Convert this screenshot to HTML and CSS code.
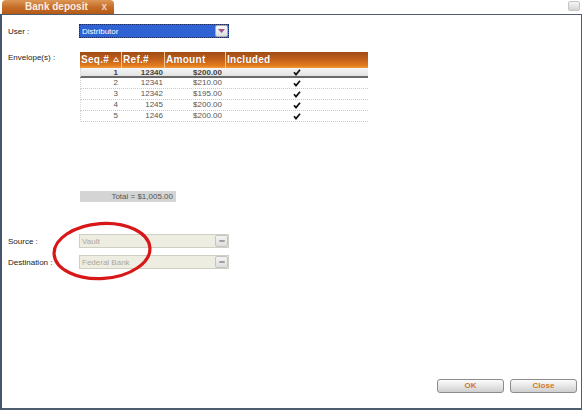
FILE: index.html
```html
<!DOCTYPE html>
<html>
<head>
<meta charset="utf-8">
<link rel="stylesheet" href="styles.css">
</head>
<body>
<div class="window">
  <div class="tabbar">
    <div class="tab"><span class="tab-title">Bank deposit</span><span class="tab-close">x</span></div>
    <div class="winbtn"></div>
  </div>
  <div class="frame">
    <div class="row user-row">
      <div class="label">User :</div>
      <div class="select active"><span class="val">Distributor</span><span class="arrow"><svg width="7" height="4" viewBox="0 0 7 4"><path d="M0 0 L7 0 L3.5 4 Z" fill="#9a5a8a"/></svg></span></div>
    </div>
    <div class="row env-row">
      <div class="label env-label">Envelope(s) :</div>
      <div class="grid">
        <div class="ghead">
          <div class="hc c1">Seq.#<svg class="sort" width="6" height="5" viewBox="0 0 6 5"><path d="M3 0.5 L5.5 4.5 L0.5 4.5 Z" fill="none" stroke="#fff" stroke-width="0.9"/></svg></div>
          <div class="hc c2">Ref.#</div>
          <div class="hc c3">Amount</div>
          <div class="hc c4">Included</div>
        </div>
        <div class="grow sel"><div class="c1">1</div><div class="c2">12340</div><div class="c3">$200.00</div><div class="c4"><svg class="chk" width="8" height="7" viewBox="0 0 8 7"><path d="M1 3.2 L3 5.6 L7 0.8" fill="none" stroke="#111" stroke-width="1.7"/></svg></div></div>
        <div class="grow"><div class="c1">2</div><div class="c2">12341</div><div class="c3">$210.00</div><div class="c4"><svg class="chk" width="8" height="7" viewBox="0 0 8 7"><path d="M1 3.2 L3 5.6 L7 0.8" fill="none" stroke="#111" stroke-width="1.7"/></svg></div></div>
        <div class="grow"><div class="c1">3</div><div class="c2">12342</div><div class="c3">$195.00</div><div class="c4"><svg class="chk" width="8" height="7" viewBox="0 0 8 7"><path d="M1 3.2 L3 5.6 L7 0.8" fill="none" stroke="#111" stroke-width="1.7"/></svg></div></div>
        <div class="grow"><div class="c1">4</div><div class="c2">1245</div><div class="c3">$200.00</div><div class="c4"><svg class="chk" width="8" height="7" viewBox="0 0 8 7"><path d="M1 3.2 L3 5.6 L7 0.8" fill="none" stroke="#111" stroke-width="1.7"/></svg></div></div>
        <div class="grow"><div class="c1">5</div><div class="c2">1246</div><div class="c3">$200.00</div><div class="c4"><svg class="chk" width="8" height="7" viewBox="0 0 8 7"><path d="M1 3.2 L3 5.6 L7 0.8" fill="none" stroke="#111" stroke-width="1.7"/></svg></div></div>
      </div>
    </div>
    <div class="row total-row">
      <div class="label"></div>
      <div class="total">Total = $1,005.00</div>
    </div>
    <div class="row src-row">
      <div class="label">Source :</div>
      <div class="select disabled"><span class="val">Vault</span><span class="arrow"><span class="dash"></span></span></div>
    </div>
    <div class="row dst-row">
      <div class="label">Destination :</div>
      <div class="select disabled"><span class="val">Federal Bank</span><span class="arrow"><span class="dash"></span></span></div>
    </div>
    <div class="buttons">
      <div class="btn">OK</div>
      <div class="btn">Close</div>
    </div>
  </div>
  <svg class="annot" width="120" height="70" viewBox="0 0 120 70"><ellipse cx="60" cy="35" rx="48" ry="27.5" fill="none" stroke="#d81818" stroke-width="3.2" transform="rotate(-4 60 35)"/></svg>
</div>
</body>
</html>
```
FILE: styles.css
```css
html, body { margin: 0; padding: 0; background: #fff; }
body { font-family: "Liberation Sans", Arial, sans-serif; font-size: 8px; color: #222; }
.window { position: relative; width: 582px; height: 410px; overflow: hidden; }
.tabbar { height: 14px; display: flex; align-items: flex-start; justify-content: space-between; }
.tab {
  margin-left: 2px; width: 112px; height: 14px; box-sizing: border-box;
  background: linear-gradient(#dd9656, #c46b26 55%, #b35a18);
  border-radius: 4px 4px 0 0;
  display: flex; align-items: center; position: relative;
}
.tab-title { font-weight: bold; font-size: 10px; color: #fbeee2; margin-left: 23px; line-height: 14px; }
.tab-close { position: absolute; right: 7px; top: 1px; color: #f0d2b6; font-size: 10px; font-weight: bold; line-height: 12px; }
.winbtn {
  width: 12px; height: 10px; margin: 1px 2px 0 0; box-sizing: border-box;
  border: 1px solid #c4c4c4; border-radius: 2px;
  background: linear-gradient(#f6f6f6, #d4d4d4);
}
.frame {
  height: 396px; box-sizing: border-box;
  border-top: 1px solid #4e5e6e; border-left: 2px solid #46566c; border-right: 1px solid #4e5e6e; border-bottom: 2px solid #4e5e6e;
  width: 582px; padding: 9px 4px 15px 6px;
  display: flex; flex-direction: column;
}
.row { display: flex; align-items: center; }
.label { width: 71px; flex: none; color: #222; }
.select {
  width: 150px; height: 14px; box-sizing: border-box; display: flex; align-items: center; justify-content: space-between;
}
.select .val { padding-left: 2px; }
.select.active { background: #2f63d4; border: 1px dotted #1a2a66; color: #fff; }
.select.disabled { background: #eeede2; border: 1px solid #d0cfc4; color: #a9a89c; }
.arrow {
  width: 13px; height: 12px; box-sizing: border-box; display: flex; align-items: center; justify-content: center;
  border: 1px solid #aaa; border-radius: 2px; background: linear-gradient(#fafafa, #dcdcdc);
}
.select.disabled .arrow { border-color: #c4c4c4; background: linear-gradient(#f4f4f4, #dedede); }
.dash { width: 6px; height: 2px; background: #a0a0a0; border-radius: 1px; }
.env-row { margin-top: 14px; align-items: flex-start; }
.env-label { margin-top: 1px; }
.grid { width: 288px; margin-left: 1px; }
.ghead {
  display: flex; height: 16px;
  background: linear-gradient(#9e4c16, #c4621c 50%, #e47c1c 85%, #f09a40);
}
.hc { color: #fff; font-weight: bold; font-size: 10px; line-height: 16px; box-sizing: border-box; padding-left: 1px; position: relative; letter-spacing: 0.3px; text-shadow: 0 0 1px #8a3a08; }
.hc + .hc { border-left: 1px solid #f5c88c; }
.c1 { width: 41px; flex: none; }
.c2 { width: 43px; flex: none; }
.c3 { width: 61px; flex: none; }
.c4 { flex: 1; }
.sort { position: absolute; right: 2px; top: 5px; }
.grow {
  display: flex; height: 11px; box-sizing: border-box; line-height: 10px;
  border-bottom: 1px dotted #c8c8c8; border-left: 1px dotted #d4d4d4; color: #555;
}
.grow .c1 { width: 40px; text-align: right; padding-right: 3px; box-sizing: border-box; }
.grow .c2 { text-align: right; padding-right: 1px; box-sizing: border-box; }
.grow .c3 { text-align: right; padding-right: 3px; box-sizing: border-box; }
.grow .c4 { display: flex; justify-content: center; align-items: center; }
.grow.sel { background: linear-gradient(#f6f6f6, #e2e2e2); border-bottom: 2px solid #6a6a6a; height: 10px; line-height: 9px; color: #444; font-weight: bold; }
.chk { display: block; }
.total-row { margin-top: 69px; }
.total { width: 96px; height: 11px; margin-left: 1px; background: #d4d4d4; color: #555; text-align: right; padding-right: 3px; box-sizing: border-box; line-height: 11px; }
.src-row { margin-top: 32px; }
.dst-row { margin-top: 7px; }
.buttons { margin-top: auto; display: flex; justify-content: flex-end; gap: 6px; }
.btn {
  width: 67px; height: 14px; box-sizing: border-box; border: 1px solid #8c8c8c; border-radius: 3px;
  background: linear-gradient(#fbfbfb, #e6e6e6 50%, #cfcfcf);
  color: #d4781c; font-weight: bold; text-align: center; line-height: 12px;
}
.annot { position: absolute; left: 42px; top: 216px; }
```
